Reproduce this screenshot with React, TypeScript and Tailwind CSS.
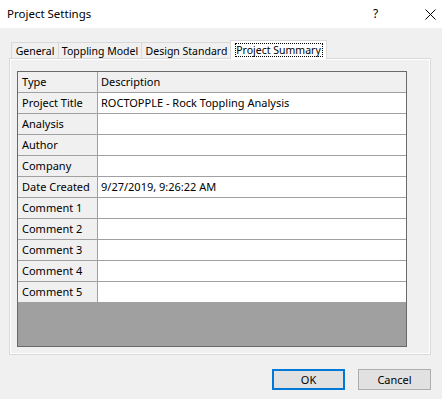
import { useState } from 'react';

const rows: [string, string][] = [
  ['Project Title', 'ROCTOPPLE - Rock Toppling Analysis'],
  ['Analysis', ''],
  ['Author', ''],
  ['Company', ''],
  ['Date Created', '9/27/2019, 9:26:22 AM'],
  ['Comment 1', ''],
  ['Comment 2', ''],
  ['Comment 3', ''],
  ['Comment 4', ''],
  ['Comment 5', ''],
];

const tabs = [
  { label: 'General', w: 'w-[48px]' },
  { label: 'Toppling Model', w: 'w-[83px]' },
  { label: 'Design Standard', w: 'w-[90px]' },
  { label: 'Project Summary', w: 'w-[97px]' },
];

export default function App() {
  const [active, setActive] = useState(3);

  return (
    <div
      className="flex h-[399px] w-[442px] flex-col bg-[#f0f0f0] text-[11px] text-black"
      style={{ fontFamily: '"Noto Sans", "Segoe UI", sans-serif' }}
    >
      {/* 标题栏 */}
      <div className="flex h-[28px] items-center bg-white pl-[7px]">
        <span className="flex-1 text-[11.5px] leading-none">Project Settings</span>
        <span className="w-[12px] text-[12px] leading-none">?</span>
        <svg className="mr-[6px] ml-[40px]" width="11" height="11" viewBox="0 0 11 11">
          <path d="M0.5 0.5 L10.5 10.5 M10.5 0.5 L0.5 10.5" stroke="#000" strokeWidth="1" />
        </svg>
      </div>

      {/* 选项卡 */}
      <div className="mt-[12px] flex h-[19px] items-end pl-[11px] text-[10.5px]">
        {tabs.map((t, i) =>
          i === active ? (
            <button
              key={t.label}
              className={`relative z-10 -ml-[2px] flex h-[19px] items-start justify-center border border-b-0 border-[#d9d9d9] bg-white pt-[2px] ${t.w}`}
            >
              <span className="flex h-[14px] w-[88px] items-center justify-center border border-dotted border-black leading-[12px] whitespace-nowrap">
                {t.label}
              </span>
            </button>
          ) : (
            <button
              key={t.label}
              onClick={() => setActive(i)}
              className={`flex h-[17px] items-start justify-center whitespace-nowrap border border-b-0 border-l-0 border-[#d9d9d9] bg-[#f0f0f0] pt-[1px] leading-[14px] first:border-l ${t.w}`}
            >
              {t.label}
            </button>
          )
        )}
      </div>

      {/* 面板 */}
      <div className="mx-[9px] -mt-px h-[297px] w-[422px] border border-[#d9d9d9]">
        <div className="h-full border border-white bg-[#f0f0f0] pt-[11px] pl-[6px]">
          <div className="flex h-[276px] w-[390px] flex-col border border-[#696969]">
            <div className="flex h-[21px] border-b border-[#a0a0a0] bg-[#f0f0f0]">
              <div className="flex w-[80px] items-center border-r border-[#a0a0a0] pl-[4px]">Type</div>
              <div className="flex flex-1 items-center pl-[3px]">Description</div>
            </div>
            {rows.map(([k, v]) => (
              <div key={k} className="flex h-[21px] border-b border-[#a0a0a0]">
                <div className="flex w-[80px] items-center border-r border-[#a0a0a0] bg-[#f0f0f0] pl-[4px]">
                  {k}
                </div>
                <div className="flex flex-1 items-center bg-white pl-[3px]">{v}</div>
              </div>
            ))}
            <div className="flex-1 bg-[#a0a0a0]" />
          </div>
        </div>
      </div>

      {/* 按钮 */}
      <div className="mt-[14px] flex justify-end gap-[13px] pr-[11px]">
        <button className="h-[21px] w-[73px] border-2 border-[#0078d7] bg-[#e1e1e1] leading-none">OK</button>
        <button className="h-[21px] w-[73px] border border-[#adadad] bg-[#e1e1e1] leading-none">Cancel</button>
      </div>
    </div>
  );
}
